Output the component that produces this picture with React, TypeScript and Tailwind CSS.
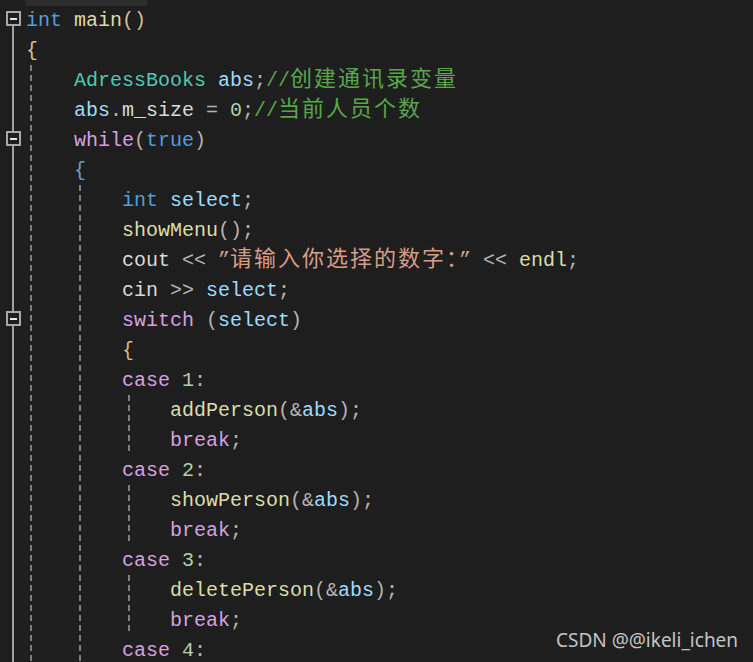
import React from "react";

type Tok = [string, string];

const KW = "text-[#569cd6]";
const FN = "text-[#dcdcaa]";
const PU = "text-[#b4b4b4]";
const TY = "text-[#4ec9b0]";
const VA = "text-[#9cdcfe]";
const ME = "text-[#dadada]";
const CM = "text-[#57a64a]";
const CT = "text-[#d8a0df]";
const NU = "text-[#b5cea8]";
const ST = "text-[#d69d85]";
const B1 = "text-[#cfc196]";
const B2 = "text-[#6c9fd0]";
const B3 = "text-[#d7ba7d]";

type Line = { indent: number; fold?: boolean; toks: Tok[] };

const lines: Line[] = [
  { indent: 0, fold: true, toks: [["int", KW], [" ", PU], ["main", FN], ["()", B1]] },
  { indent: 0, toks: [["{", B1]] },
  { indent: 1, toks: [["AdressBooks", TY], [" ", PU], ["abs", VA], [";", PU], ["//创建通讯录变量", CM]] },
  { indent: 1, toks: [["abs", VA], [".", PU], ["m_size", ME], [" = ", PU], ["0", NU], [";", PU], ["//当前人员个数", CM]] },
  { indent: 1, fold: true, toks: [["while", CT], ["(", PU], ["true", KW], [")", PU]] },
  { indent: 1, toks: [["{", B2]] },
  { indent: 2, toks: [["int", KW], [" ", PU], ["select", VA], [";", PU]] },
  { indent: 2, toks: [["showMenu", FN], ["()", PU], [";", PU]] },
  { indent: 2, toks: [["cout", ME], [" << ", PU], ["”请输入你选择的数字：”", ST], [" << ", PU], ["endl", FN], [";", PU]] },
  { indent: 2, toks: [["cin", ME], [" >> ", PU], ["select", VA], [";", PU]] },
  { indent: 2, fold: true, toks: [["switch", CT], [" ", PU], ["(", PU], ["select", VA], [")", PU]] },
  { indent: 2, toks: [["{", B3]] },
  { indent: 2, toks: [["case", CT], [" ", PU], ["1", NU], [":", PU]] },
  { indent: 3, toks: [["addPerson", FN], ["(", PU], ["&", PU], ["abs", VA], [")", PU], [";", PU]] },
  { indent: 3, toks: [["break", CT], [";", PU]] },
  { indent: 2, toks: [["case", CT], [" ", PU], ["2", NU], [":", PU]] },
  { indent: 3, toks: [["showPerson", FN], ["(", PU], ["&", PU], ["abs", VA], [")", PU], [";", PU]] },
  { indent: 3, toks: [["break", CT], [";", PU]] },
  { indent: 2, toks: [["case", CT], [" ", PU], ["3", NU], [":", PU]] },
  { indent: 3, toks: [["deletePerson", FN], ["(", PU], ["&", PU], ["abs", VA], [")", PU], [";", PU]] },
  { indent: 3, toks: [["break", CT], [";", PU]] },
  { indent: 2, toks: [["case", CT], [" ", PU], ["4", NU], [":", PU]] },
];

const guideOffsets = ["ml-[4px]", "ml-[5px]", "ml-[6px]"];

function splitRuns(s: string): { text: string; cjk: boolean }[] {
  const out: { text: string; cjk: boolean }[] = [];
  for (const ch of Array.from(s)) {
    const cjk = /[\u3000-\u9fff\uff00-\uffef]/.test(ch);
    const last = out[out.length - 1];
    if (last && last.cjk === cjk) last.text += ch;
    else out.push({ text: ch, cjk });
  }
  return out;
}

function TokenView({ t }: { t: Tok }) {
  const runs = splitRuns(t[0]);
  return (
    <span className={t[1]}>
      {runs.map((r, i) =>
        r.cjk ? (
          <span key={i} className="font-['Noto_Sans_CJK_SC',sans-serif] text-[22px] leading-[20px] tracking-[2px]">
            {r.text}
          </span>
        ) : (
          <span key={i}>{r.text}</span>
        )
      )}
    </span>
  );
}

function Gutter({ fold, first }: { fold?: boolean; first: boolean }) {
  return (
    <div className="w-[26px] h-[30px] flex flex-col items-center shrink-0">
      {fold ? (
        <>
          <div className={first ? "h-[6px] w-[2px]" : "h-[6px] w-[2px] bg-[#a0a0a0]"} />
          <div className="w-[15px] h-[15px] border-2 border-[#a8a8a8] bg-[#1e1e1e] flex items-center justify-center">
            <div className="w-[7px] h-[2px] bg-[#e8e8e8]" />
          </div>
          <div className="flex-1 w-[2px] bg-[#a0a0a0]" />
        </>
      ) : (
        <div className="h-full w-[2px] bg-[#a0a0a0]" />
      )}
    </div>
  );
}

export default function App() {
  return (
    <div className="relative w-[753px] h-[662px] bg-[#1e1e1e] overflow-hidden font-['Liberation_Mono',monospace] text-[20px]">
      <div className="absolute top-0 left-[25px] w-[122px] h-[6px] bg-[#2d2d2d]" />
      <div className="pt-[5px] flex flex-col">
        {lines.map((ln, i) => (
          <div key={i} className="flex h-[30px]">
            <Gutter fold={ln.fold} first={i === 0} />
            {Array.from({ length: ln.indent }).map((_, k) => (
              <div key={k} className="w-[48px] h-[30px] shrink-0">
                <div
                  className={`${guideOffsets[k]} w-[2px] h-full bg-[repeating-linear-gradient(to_bottom,#7c7c7c_0px,#7c7c7c_6px,transparent_6px,transparent_10px)]`}
                />
              </div>
            ))}
            <div className="leading-[30px] whitespace-pre pt-[1px]">
              {ln.toks.map((t, k) => (
                <TokenView key={k} t={t} />
              ))}
            </div>
          </div>
        ))}
      </div>
      <div className="absolute left-[556px] top-[627px] font-['Noto_Sans',sans-serif] text-[19px] leading-[26px] text-[#c4c4c4]">
        CSDN @@ikeli_ichen
      </div>
    </div>
  );
}
